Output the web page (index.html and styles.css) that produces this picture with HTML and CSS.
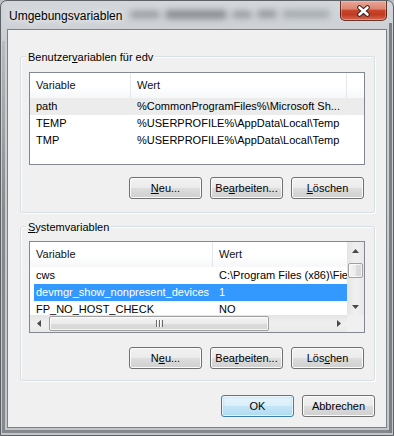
FILE: index.html
```html
<!DOCTYPE html>
<html lang="de">
<head>
<meta charset="utf-8">
<title>Umgebungsvariablen</title>
<link rel="stylesheet" href="styles.css">
</head>
<body>
<div class="window">
  <div class="titlebar">
    <div class="title">Umgebungsvariablen</div>
    <div class="ghost" aria-hidden="true">
      <span class="g g1"></span><span class="g g2"></span><span class="g g3"></span><span class="g g4"></span><span class="g g5"></span>
    </div>
    <div class="close">
      <svg width="15" height="12" viewBox="0 0 15 12">
        <path d="M3.5 2.5 L11.5 9.5 M11.5 2.5 L3.5 9.5" stroke="#3a2420" stroke-width="4.6" stroke-linecap="round" fill="none"/>
        <path d="M3.5 2.5 L11.5 9.5 M11.5 2.5 L3.5 9.5" stroke="#ffffff" stroke-width="2.6" stroke-linecap="round" fill="none"/>
      </svg>
    </div>
  </div>
  <div class="client">
    <section class="group group-user">
      <div class="group-label">Benutzer<u>v</u>ariablen für edv</div>
      <div class="list list-user">
        <div class="lv-head">
          <div class="hc u1">Variable</div>
          <div class="hc u2">Wert</div>
          <div class="hc hc-last"></div>
        </div>
        <div class="lv-row sel-inactive"><div class="cell u1">path</div><div class="cell u2">%CommonProgramFiles%\Microsoft Sh...</div></div>
        <div class="lv-row"><div class="cell u1">TEMP</div><div class="cell u2">%USERPROFILE%\AppData\Local\Temp</div></div>
        <div class="lv-row"><div class="cell u1">TMP</div><div class="cell u2">%USERPROFILE%\AppData\Local\Temp</div></div>
      </div>
      <div class="btn-row">
        <button class="btn"><u>N</u>eu...</button>
        <button class="btn">Be<u>a</u>rbeiten...</button>
        <button class="btn"><u>L</u>öschen</button>
      </div>
    </section>

    <section class="group group-sys">
      <div class="group-label"><u>S</u>ystemvariablen</div>
      <div class="list list-sys">
        <div class="lv-view">
          <div class="lv-head">
            <div class="hc s1">Variable</div>
            <div class="hc s2 hc-last">Wert</div>
          </div>
          <div class="lv-row"><div class="cell s1">cws</div><div class="cell s2">C:\Program Files (x86)\Fie</div></div>
          <div class="lv-row sel-active"><div class="cell s1">devmgr_show_nonpresent_devices</div><div class="cell s2">1</div></div>
          <div class="lv-row"><div class="cell s1">FP_NO_HOST_CHECK</div><div class="cell s2">NO</div></div>
        </div>
        <div class="vscroll">
          <div class="sb-btn"><svg width="7" height="4" viewBox="0 0 7 4"><path d="M0 4 L3.5 0 L7 4 Z" fill="#4a4a4a"/></svg></div>
          <div class="thumb-v"></div>
          <div class="sb-fill"></div>
          <div class="sb-btn"><svg width="7" height="4" viewBox="0 0 7 4"><path d="M0 0 L3.5 4 L7 0 Z" fill="#4a4a4a"/></svg></div>
        </div>
        <div class="hscroll">
          <div class="sb-btn"><svg width="4" height="7" viewBox="0 0 4 7"><path d="M4 0 L0 3.5 L4 7 Z" fill="#4a4a4a"/></svg></div>
          <div class="thumb-h"><span class="grip"></span></div>
          <div class="sb-fill"></div>
          <div class="sb-btn"><svg width="4" height="7" viewBox="0 0 4 7"><path d="M0 0 L4 3.5 L0 7 Z" fill="#4a4a4a"/></svg></div>
        </div>
        <div class="sb-corner"></div>
      </div>
      <div class="btn-row">
        <button class="btn">N<u>e</u>u...</button>
        <button class="btn">Bea<u>r</u>beiten...</button>
        <button class="btn">Lös<u>c</u>hen</button>
      </div>
    </section>

    <div class="dialog-buttons">
      <button class="btn btn-default">OK</button>
      <button class="btn">Abbrechen</button>
    </div>
  </div>
</div>
</body>
</html>
```

FILE: styles.css
```css
* { box-sizing: border-box; }
html, body { margin: 0; padding: 0; }
body {
  width: 394px;
  height: 436px;
  overflow: hidden;
  background: #b9bec3;
  font-family: "Liberation Sans", Arial, sans-serif;
  font-size: 11px;
  color: #000;
}

.window {
  position: relative;
  width: 394px;
  height: 436px;
  border: 1px solid #5d6267;
  border-radius: 7px 7px 0 0;
  background: linear-gradient(to bottom, #d3d7db 0, #cbcfd3 40px, #c3c7cb 100%);
  display: flex;
  flex-direction: column;
  overflow: hidden;
}
.window::before {
  content: "";
  position: absolute;
  left: 1px;
  right: 1px;
  top: 40px;
  bottom: 2px;
  border-left: 3px solid #85898d;
  border-bottom: 3px solid #85898d;
  -webkit-mask-image: linear-gradient(to bottom, rgba(0,0,0,0.25), #000 170px);
  mask-image: linear-gradient(to bottom, rgba(0,0,0,0.25), #000 170px);
  pointer-events: none;
}
.window::after {
  content: "";
  position: absolute;
  right: 1px;
  top: 22px;
  bottom: 2px;
  width: 3px;
  background: #7c8084;
  pointer-events: none;
}

/* title bar */
.titlebar {
  height: 28px;
  flex: 0 0 28px;
  display: flex;
  align-items: flex-start;
}
.title {
  padding: 8px 0 0 8px;
  font-size: 12px;
  line-height: 15px;
  white-space: nowrap;
  color: #000;
  text-shadow: 0 0 5px #eef0f2, 0 0 9px #eef0f2;
}
.ghost {
  display: flex;
  align-items: center;
  gap: 5px;
  height: 22px;
  padding: 4px 0 0 8px;
  filter: blur(3.2px);
}
.g {
  display: block;
  height: 8px;
  border-radius: 4px;
  background: rgba(80, 84, 90, 0.45);
}
.g1 { width: 30px; height: 7px; }
.g2 { width: 62px; height: 9px; background: rgba(70, 74, 80, 0.5); }
.g3 { width: 20px; height: 7px; }
.g4 { width: 20px; height: 8px; }
.g5 { width: 48px; height: 8px; background: rgba(90, 94, 100, 0.35); }

.close {
  margin-left: auto;
  margin-right: 6px;
  width: 47px;
  height: 20px;
  border: 1px solid rgba(70, 25, 18, 0.8);
  border-top: none;
  border-radius: 0 0 5px 5px;
  background: linear-gradient(to bottom, #e9a698 0%, #dc8470 42%, #c8462d 50%, #bf3a20 72%, #d66a51 100%);
  box-shadow: inset 0 0 0 1px rgba(255, 220, 210, 0.35);
  display: flex;
  align-items: center;
  justify-content: center;
}

/* client */
.client {
  margin: 0 6px;
  height: 399px;
  flex: 0 0 399px;
  border: 1px solid #7b8085;
  background: #f0f0f0;
  padding: 26px 11px 0 12px;
  display: flex;
  flex-direction: column;
}

.group {
  position: relative;
  border: 1px solid #d5dfe5;
  border-radius: 3px;
  box-shadow: inset 1px 1px 0 #fff, 1px 1px 0 #fff;
}
.group-user { padding: 15px 9px 13px 8px; }
.group-sys { margin-top: 13px; padding: 14px 9px 11px 8px; }
.group-label {
  position: absolute;
  left: 5px;
  top: -7px;
  padding: 0 2px;
  line-height: 14px;
  background: #f0f0f0;
  white-space: nowrap;
}

/* list views */
.list {
  background: #fff;
  border: 1px solid #828790;
  overflow: hidden;
}
.list-user { height: 93px; }
.list-sys {
  height: 92px;
  display: grid;
  grid-template-columns: 1fr 17px;
  grid-template-rows: 1fr 17px;
}
.lv-view { overflow: hidden; min-width: 0; min-height: 0; }

.lv-head {
  display: flex;
  height: 25px;
  background: linear-gradient(to bottom, #ffffff 0, #ffffff 55%, #f6f7f9 100%);
}
.hc {
  flex: 0 0 auto;
  padding-left: 6px;
  line-height: 25px;
  border-right: 1px solid #e3e6ea;
  white-space: nowrap;
  overflow: hidden;
  color: #111;
}
.hc-last { flex: 1 1 auto; border-right: 0; }

.lv-row {
  display: flex;
  height: 17px;
  line-height: 17px;
}
.cell {
  flex: 0 0 auto;
  padding-left: 6px;
  white-space: nowrap;
  overflow: hidden;
}
.u1 { width: 101px; }
.u2 { width: 216px; }
.s1 { width: 183px; }
.s2 { width: 134px; }

.sel-inactive { background: #ececec; }
.sel-active {
  background: #3399ff;
  color: #fff;
  margin-left: 4px;
}
.sel-active .s1 { width: 179px; padding-left: 2px; }

/* scrollbars */
.vscroll {
  display: flex;
  flex-direction: column;
  background: linear-gradient(to right, #e4e4e4, #efefef 45%, #efefef 60%, #e8e8e8);
}
.hscroll {
  display: flex;
  background: linear-gradient(to bottom, #e4e4e4, #efefef 45%, #efefef 60%, #e8e8e8);
}
.sb-btn {
  flex: 0 0 17px;
  width: 17px;
  height: 17px;
  display: flex;
  align-items: center;
  justify-content: center;
}
.sb-fill { flex: 1 1 auto; }
.thumb-v {
  flex: 0 0 15px;
  margin: 4px 1px 0;
  border: 1px solid #a0a0a0;
  border-radius: 2px;
  background: linear-gradient(to right, #f4f4f4, #ebebeb 50%, #dcdcdc 51%, #d6d6d6);
  box-shadow: inset 0 0 0 1px rgba(255,255,255,0.75);
}
.thumb-h {
  flex: 0 0 220px;
  margin: 1px 0 1px 2px;
  border: 1px solid #a0a0a0;
  border-radius: 2px;
  background: linear-gradient(to bottom, #f4f4f4, #ebebeb 50%, #dcdcdc 51%, #d6d6d6);
  box-shadow: inset 0 0 0 1px rgba(255,255,255,0.75);
  display: flex;
  align-items: center;
  justify-content: center;
}
.grip {
  width: 7px;
  height: 7px;
  background: repeating-linear-gradient(to right, #6a6a6a 0 1px, #fbfbfb 1px 2px, transparent 2px 3px);
}
.sb-corner { background: #f0f0f0; }

/* buttons */
.btn-row {
  display: flex;
  justify-content: flex-end;
  gap: 8px;
  margin-top: 12px;
  padding-right: 1px;
}
.group-sys .btn-row { margin-top: 14px; }
.btn {
  width: 73px;
  height: 22px;
  padding: 0;
  margin: 0;
  border: 1px solid #707070;
  border-radius: 3px;
  background: linear-gradient(to bottom, #f2f2f2 0%, #ebebeb 48%, #dddddd 52%, #cfcfcf 100%);
  box-shadow: inset 0 0 0 1px #fbfbfb;
  font: inherit;
  color: #000;
  line-height: 20px;
  text-align: center;
}
.btn-default {
  border-color: #3c7fb1;
  background: linear-gradient(to bottom, #e8f5fc 0%, #d9effa 48%, #c4e5f6 52%, #b3dbf1 100%);
  box-shadow: inset 0 0 0 1px rgba(255,255,255,0.7), inset 0 0 3px 1px #a9dbf6;
}
.dialog-buttons {
  display: flex;
  justify-content: flex-end;
  gap: 8px;
  margin-top: 14px;
}
```
